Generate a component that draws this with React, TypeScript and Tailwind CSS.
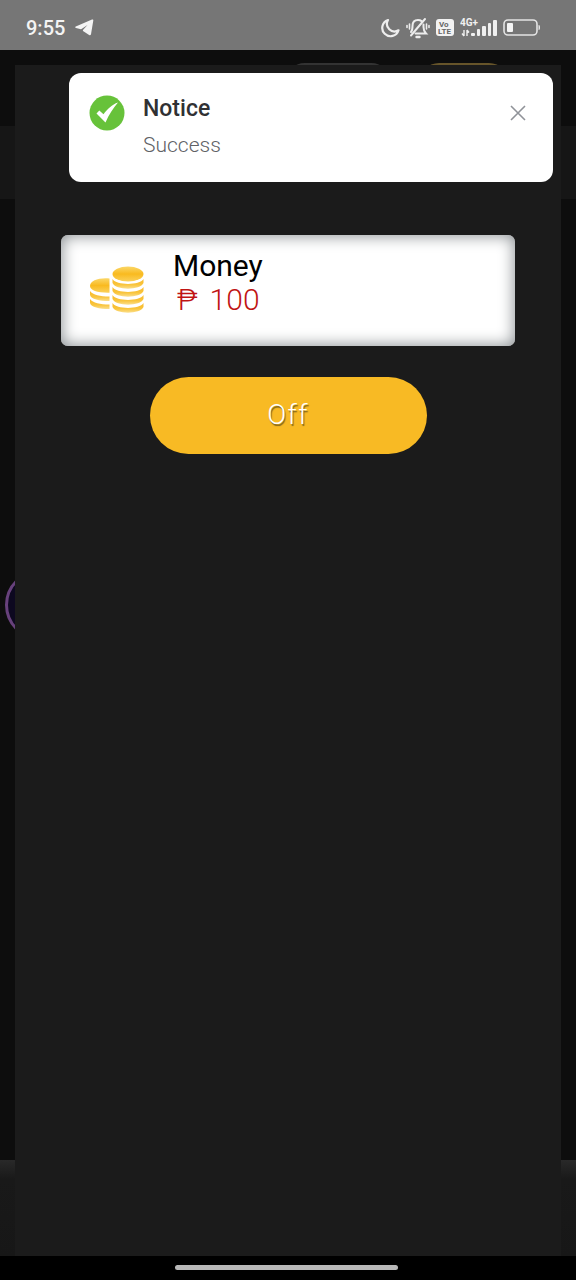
import { useState } from 'react';

function TelegramIcon() {
  return (
    <svg width="19" height="17" viewBox="0 0 19 17" fill="#f4f4f4" aria-hidden="true">
      <path d="M.8 7.500 17 .5c.8-.3 1.500.1 1.300 1l-2.300 13.700c-.2 1.100-1 1.400-1.900.8L8.400 12.300c-.7-.6-.7-1.200 0-1.900L12.500 6 6.500 9.900c-.5.3-1 .4-1.500.2L1 9C.1 8.700 0 7.900.8 7.500Z" />
    </svg>
  );
}

function MoonIcon() {
  return (
    <svg width="20" height="20" viewBox="0 0 20 20" fill="none" stroke="#ededed" strokeWidth="2.2" strokeLinejoin="round" aria-hidden="true">
      <path d="M8 2A8.300 8.300 0 1 0 18.500 12.300A7.600 7.600 0 0 1 8 2Z" />
    </svg>
  );
}

function MutedBellIcon() {
  return (
    <svg width="24" height="22" viewBox="0 0 24 22" fill="none" stroke="#ededed" strokeWidth="2" strokeLinecap="round" aria-hidden="true">
      <path d="M5 15c1.300-1.300 1.500-3 1.500-6C6.500 5.500 8.500 3 12 3c1.500 0 2.700.4 3.600 1.100M17.500 7.500V10c0 3.500.8 4.800 2.500 6.500H9.500" />
      <path d="M19 2 5 18.500" />
      <path d="M10.500 20h3" strokeWidth="2.4" />
      <path d="M3.500 7v5M1 8.500v2M20.500 7v5M23 8.500v2" strokeWidth="1.600" />
    </svg>
  );
}

function VolteIcon() {
  return (
    <svg width="18" height="17" viewBox="0 0 18 17" aria-hidden="true">
      <rect width="18" height="17" rx="3" fill="#f2f2f2" />
      <text x="3" y="8" fontFamily="Roboto, sans-serif" fontSize="8" fontWeight="700" fill="#666">Vo</text>
      <text x="2" y="15" fontFamily="Roboto, sans-serif" fontSize="8" fontWeight="700" fill="#666">LTE</text>
    </svg>
  );
}

function SignalIcon() {
  return (
    <svg width="37" height="20" viewBox="0 0 37 20" fill="#f0f0f0" aria-hidden="true">
      <text x="0" y="8" fontFamily="Roboto, sans-serif" fontSize="10" fontWeight="700">4G+</text>
      <path d="M4 12v6M2 15.500 4 18M7 18v-6M9 14.500 7 12" stroke="#f0f0f0" strokeWidth="1.400" fill="none" />
      <rect x="11" y="15" width="4" height="3" rx="1" />
      <rect x="17" y="11" width="3" height="7" rx="1" />
      <rect x="22" y="8" width="4" height="10" rx="1" />
      <rect x="28" y="5" width="3" height="13" rx="1" />
      <rect x="33" y="2" width="4" height="16" rx="1" />
    </svg>
  );
}

function BatteryIcon() {
  return (
    <svg width="38" height="17" viewBox="0 0 38 17" aria-hidden="true">
      <rect x="1" y="1" width="33" height="15" rx="4" fill="none" stroke="#e4e4e4" strokeWidth="1.600" />
      <rect x="4" y="4" width="6" height="9" rx="1" fill="#f5f5f5" />
      <path d="M35.500 6v5c1.300 0 1.500-.8 1.500-2.500S36.800 6 35.500 6Z" fill="#e4e4e4" />
    </svg>
  );
}

function CoinsIcon() {
  return (
    <svg width="56" height="48" viewBox="0 0 56 48" aria-hidden="true">
      <defs>
        <linearGradient id="coinTop" x1="0" y1="0" x2="0" y2="1">
          <stop offset="0" stopColor="#fbd768" />
          <stop offset="0.5" stopColor="#f9ba1f" />
          <stop offset="1" stopColor="#fbd15a" />
        </linearGradient>
        <linearGradient id="coinEdge" x1="0" y1="0" x2="0" y2="1">
          <stop offset="0" stopColor="#f8b825" />
          <stop offset="0.6" stopColor="#f9c53e" />
          <stop offset="1" stopColor="#fbdf8c" />
        </linearGradient>
      </defs>
      <path d="M20.500 12.500C10 11.500 1 14.500 1 20c0 4.500 8 7 19.500 6.700Z" fill="url(#coinTop)" />
      {[25, 33].map((y) => (
        <path key={y} d={`M1 ${y}c3 4 10 5.500 19.500 5.500v4.500C10 ${y + 10} 2 ${y + 8} 1 ${y + 4}Z`} fill="url(#coinEdge)" />
      ))}
      <ellipse cx="39" cy="8" rx="15.500" ry="7.500" fill="url(#coinTop)" />
      {[13, 21, 29, 37].map((y) => (
        <path key={y} d={`M23.500 ${y}c4 6.500 27 6.500 31 0v4c-3 7.500-28 7.500-31 0Z`} fill="url(#coinEdge)" />
      ))}
    </svg>
  );
}

function StatusBar() {
  return (
    <header className="flex h-[50px] items-center justify-between bg-[#767676] pt-[5px] pr-[35px] pl-[26px]">
      <div className="flex items-center gap-[10px]">
        <span className="text-[20px] leading-6 font-medium text-[#f4f4f4]">9:55</span>
        <TelegramIcon />
      </div>
      <div className="flex items-center gap-[6px]">
        <MoonIcon />
        <MutedBellIcon />
        <VolteIcon />
        <div className="flex items-center gap-[6px]">
          <SignalIcon />
          <BatteryIcon />
        </div>
      </div>
    </header>
  );
}

// Page that stays dimmed behind the dialog
function DimmedPage() {
  return (
    <div className="flex flex-1 flex-col bg-[#0d0d0d]" aria-hidden="true">
      <div className="flex h-[76px] justify-end gap-7 overflow-hidden pt-[13px] pr-[67px]">
        <div className="h-10 w-[106px] rounded-[20px] border-2 border-[#333]" />
        <div className="h-10 w-[90px] rounded-[20px] bg-[#67552a]" />
      </div>
      <div className="h-[73px] bg-[#161616]" />
      <div className="flex flex-1 items-start overflow-hidden pt-[371px]">
        <div className="ml-[5px] size-[70px] rounded-full border-[3px] border-[#67417b] bg-[#0d0820]" />
      </div>
      <div className="h-24 bg-linear-to-b from-[#292929] via-[#191919] via-20% to-[#171717]" />
    </div>
  );
}

function Notice({ onClose }: { onClose: () => void }) {
  return (
    <div role="status" className="absolute top-[23px] right-[23px] left-[69px] flex h-[109px] items-start rounded-xl bg-white pt-[22px] pr-[27px] pl-5">
      <svg width="36" height="36" viewBox="0 0 36 36" aria-hidden="true">
        <circle cx="18" cy="18" r="17.500" fill="#67c23a" />
        <path d="M7.500 18.500 10.300 15.500 14.500 19.200C18.500 14 23 9.500 29 7.500 24 13.500 20 19.500 16.500 27.500Z" fill="#fff" />
      </svg>
      <div className="ml-[18px] flex-1">
        <h2 className="text-[23px] leading-7 font-medium text-[#303133]">Notice</h2>
        <p className="mt-2 text-[21px] leading-7 font-light text-[#606266]">Success</p>
      </div>
      <button type="button" onClick={onClose} aria-label="Close" className="mt-[10px]">
        <svg width="16" height="16" viewBox="0 0 16 16" stroke="#909399" strokeWidth="1.600" aria-hidden="true">
          <path d="m1 1 14 14M15 1 1 15" />
        </svg>
      </button>
    </div>
  );
}

export default function App() {
  const [showNotice, setShowNotice] = useState(true);
  const [open, setOpen] = useState(true);

  return (
    <div className="flex min-h-screen flex-col bg-black font-[Roboto,sans-serif]">
      <StatusBar />
      <main className="relative flex flex-1 flex-col">
        <DimmedPage />
        {open && (
          <section role="dialog" aria-label="Money" className="absolute inset-x-[15px] top-[15px] bottom-0 flex flex-col items-center bg-[#1b1b1b] px-[46px] pt-[170px]">
            <div className="flex h-[111px] w-full items-start rounded-[7px] bg-white pt-[14px] pl-[28px] shadow-[inset_0_0_15px_1px_#8b9093]">
              <div className="mt-[17px]">
                <CoinsIcon />
              </div>
              <div className="ml-7 text-[30px] leading-[34px]">
                <h1 className="text-black">Money</h1>
                <p className="flex gap-3 pl-1 font-light text-[#c01414]">
                  <span>₱</span>
                  <span>100</span>
                </p>
              </div>
            </div>
            <button
              type="button"
              onClick={() => setOpen(false)}
              className="mt-[31px] h-[77px] w-[277px] rounded-full bg-[#f8ba24] pb-[2px] text-[28px] font-light tracking-wider text-white [text-shadow:1px_2px_1px_#80651c]"
            >
              Off
            </button>
          </section>
        )}
        {showNotice && <Notice onClose={() => setShowNotice(false)} />}
      </main>
      <footer className="flex h-6 items-center justify-center bg-black pr-[3px]">
        <div className="mb-[2px] h-[5px] w-[223px] rounded-full bg-[#b8b8b8]" />
      </footer>
    </div>
  );
}
